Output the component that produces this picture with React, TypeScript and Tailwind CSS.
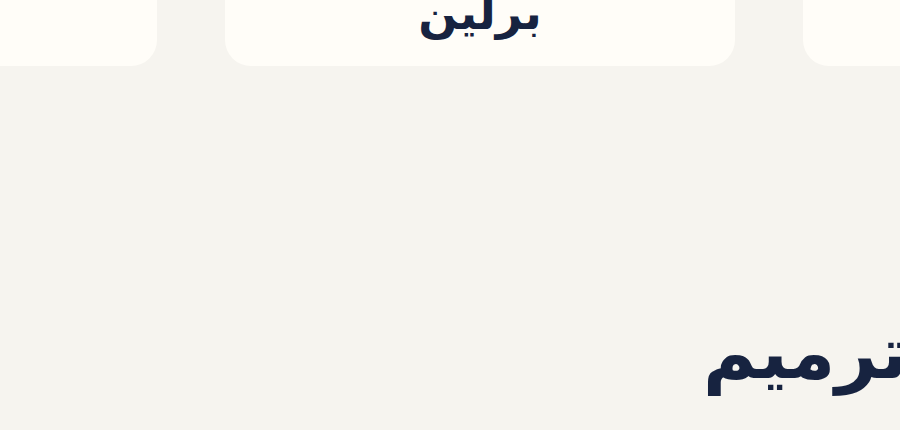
const cities = ['رم', 'برلین', 'پاریس'];

export default function App() {
  return (
    <div
      className="w-[900px] h-[430px] overflow-hidden bg-[#f6f4ef] text-[#172340]"
      style={{ fontFamily: '"DejaVu Sans", sans-serif' }}
    >
      <div className="flex gap-[68px] -mt-[60px] ml-[-353px] w-[1665px]">
        {cities.map((c) => (
          <div
            key={c}
            className="w-[510px] h-[126px] shrink-0 rounded-[26px] bg-[#fffdf8] flex items-end justify-center pb-[30px]"
          >
            <span dir="rtl" className="text-[46px] font-bold leading-none">{c}</span>
          </div>
        ))}
      </div>
      <div dir="rtl" className="flex -mr-[8px] mt-[250px]">
        <h2 className="text-[73px] font-bold leading-none">ترمیم</h2>
      </div>
    </div>
  );
}
